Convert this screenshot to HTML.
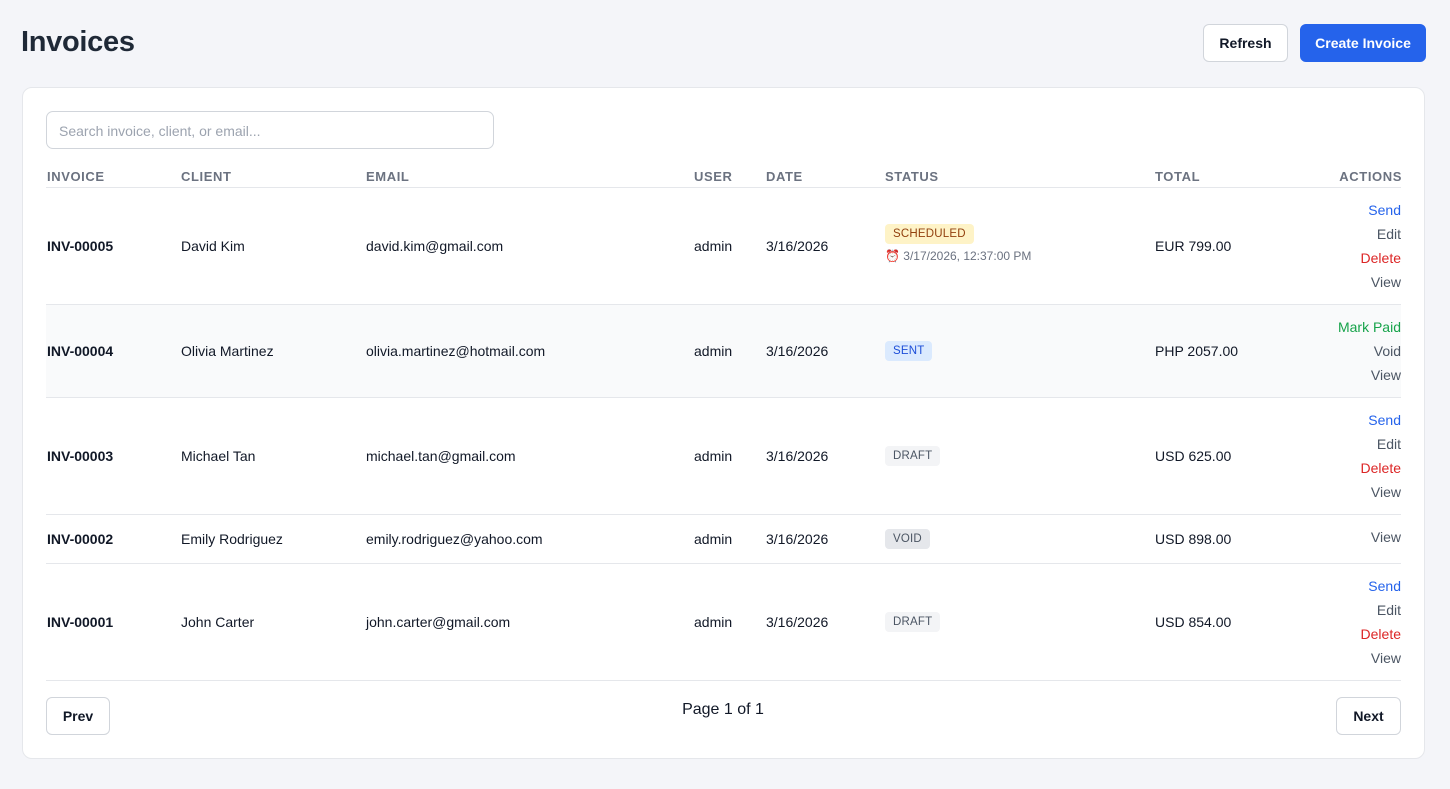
<!DOCTYPE html>
<html><head><meta charset="utf-8"><style>
*{box-sizing:border-box;margin:0;padding:0}
body{width:1450px;height:789px;background:#f4f5f9;font-family:"Liberation Sans",Arial,sans-serif;color:#111827;position:relative;overflow:hidden}
.abs{position:absolute}
h1{position:absolute;left:21px;top:26px;font-size:29px;font-weight:700;color:#1f2937;letter-spacing:-0.3px}
.btn{position:absolute;border:1px solid #d1d5db;background:#fff;border-radius:6px;font-size:14px;font-weight:700;display:flex;align-items:center;justify-content:center;color:#111827}
.card{position:absolute;left:22px;top:87px;width:1403px;height:672px;background:#fff;border:1px solid #e5e7eb;border-radius:10px}
.search{position:absolute;left:46px;top:111px;width:448px;height:38px;border:1px solid #d1d5db;border-radius:7px;font-size:14px;color:#9ca3af;padding:11px 12px}
.th{position:absolute;top:169px;font-size:13px;font-weight:700;color:#6b7280;letter-spacing:0.6px}
.row{position:absolute;left:46px;width:1355px;border-bottom:1px solid #e5e7eb}
.c{position:absolute;top:50%;transform:translateY(-50%);font-size:14px;white-space:nowrap}
.act{position:absolute;right:0;top:50%;transform:translateY(-50%);text-align:right;font-size:14px;line-height:24px}
.badge{display:inline-block;font-size:11.5px;padding:4px 8px;border-radius:4px;letter-spacing:0.2px}
.b{color:#2563eb}.g{color:#4b5563}.r{color:#dc2626}.gr{color:#16a34a}
</style></head><body>
<h1>Invoices</h1>
<div class="btn" style="left:1203px;top:24px;width:85px;height:38px">Refresh</div>
<div class="btn" style="left:1300px;top:24px;width:126px;height:38px;background:#2563eb;border-color:#2563eb;color:#fff">Create Invoice</div>
<div class="card"></div>
<div class="search">Search invoice, client, or email...</div>
<div class="th" style="left:47px">INVOICE</div>
<div class="th" style="left:181px">CLIENT</div>
<div class="th" style="left:366px">EMAIL</div>
<div class="th" style="left:694px">USER</div>
<div class="th" style="left:766px">DATE</div>
<div class="th" style="left:885px">STATUS</div>
<div class="th" style="left:1155px">TOTAL</div>
<div class="th" style="right:49px;letter-spacing:0.6px;margin-right:-1px">ACTIONS</div>
<div class="abs" style="left:46px;top:187px;width:1355px;height:1px;background:#e5e7eb"></div>

<div class="row" style="top:188px;height:117px">
<div class="c" style="left:1px;font-weight:700">INV-00005</div>
<div class="c" style="left:135px">David Kim</div>
<div class="c" style="left:320px">david.kim@gmail.com</div>
<div class="c" style="left:648px">admin</div>
<div class="c" style="left:720px">3/16/2026</div>
<div class="c" style="left:839px;top:36px;transform:none"><span class="badge" style="background:#fef3c7;color:#92400e">SCHEDULED</span><div style="font-size:12px;color:#6b7280;margin-top:5px">⏰ 3/17/2026, 12:37:00 PM</div></div>
<div class="c" style="left:1109px">EUR 799.00</div>
<div class="act"><div class="b">Send</div><div class="g">Edit</div><div class="r">Delete</div><div class="g">View</div></div>
</div>

<div class="row" style="top:305px;height:93px;background:#f9fafb">
<div class="c" style="left:1px;font-weight:700">INV-00004</div>
<div class="c" style="left:135px">Olivia Martinez</div>
<div class="c" style="left:320px">olivia.martinez@hotmail.com</div>
<div class="c" style="left:648px">admin</div>
<div class="c" style="left:720px">3/16/2026</div>
<div class="c" style="left:839px"><span class="badge" style="background:#dbeafe;color:#1d4ed8">SENT</span></div>
<div class="c" style="left:1109px">PHP 2057.00</div>
<div class="act"><div class="gr">Mark Paid</div><div class="g">Void</div><div class="g">View</div></div>
</div>

<div class="row" style="top:398px;height:117px">
<div class="c" style="left:1px;font-weight:700">INV-00003</div>
<div class="c" style="left:135px">Michael Tan</div>
<div class="c" style="left:320px">michael.tan@gmail.com</div>
<div class="c" style="left:648px">admin</div>
<div class="c" style="left:720px">3/16/2026</div>
<div class="c" style="left:839px"><span class="badge" style="background:#f3f4f6;color:#4b5563">DRAFT</span></div>
<div class="c" style="left:1109px">USD 625.00</div>
<div class="act"><div class="b">Send</div><div class="g">Edit</div><div class="r">Delete</div><div class="g">View</div></div>
</div>

<div class="row" style="top:515px;height:49px">
<div class="c" style="left:1px;font-weight:700">INV-00002</div>
<div class="c" style="left:135px">Emily Rodriguez</div>
<div class="c" style="left:320px">emily.rodriguez@yahoo.com</div>
<div class="c" style="left:648px">admin</div>
<div class="c" style="left:720px">3/16/2026</div>
<div class="c" style="left:839px"><span class="badge" style="background:#e5e7eb;color:#4b5563">VOID</span></div>
<div class="c" style="left:1109px">USD 898.00</div>
<div class="act" style="margin-top:-2px"><div class="g">View</div></div>
</div>

<div class="row" style="top:564px;height:117px">
<div class="c" style="left:1px;font-weight:700">INV-00001</div>
<div class="c" style="left:135px">John Carter</div>
<div class="c" style="left:320px">john.carter@gmail.com</div>
<div class="c" style="left:648px">admin</div>
<div class="c" style="left:720px">3/16/2026</div>
<div class="c" style="left:839px"><span class="badge" style="background:#f3f4f6;color:#4b5563">DRAFT</span></div>
<div class="c" style="left:1109px">USD 854.00</div>
<div class="act"><div class="b">Send</div><div class="g">Edit</div><div class="r">Delete</div><div class="g">View</div></div>
</div>

<div class="btn" style="left:46px;top:697px;width:64px;height:38px">Prev</div>
<div class="abs" style="left:-2px;width:1450px;top:701px;text-align:center;font-size:16px;color:#111827">Page 1 of 1</div>
<div class="btn" style="left:1336px;top:697px;width:65px;height:38px">Next</div>
</body></html>
